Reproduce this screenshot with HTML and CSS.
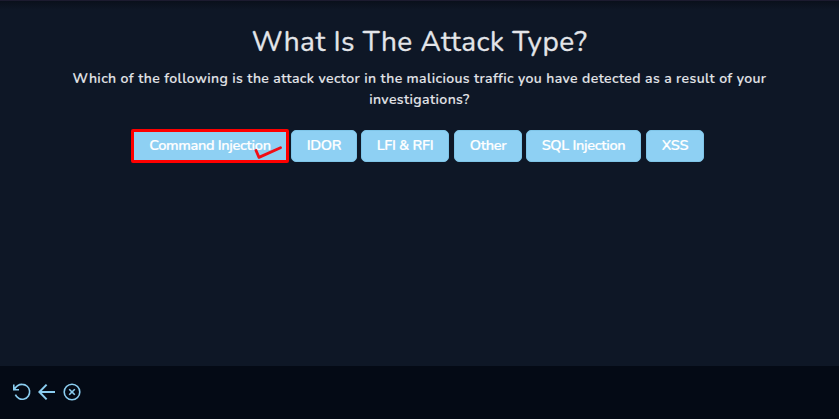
FILE: index.html
```
<!DOCTYPE html>
<html lang="en">
<head>
<meta charset="utf-8">
<title>What Is The Attack Type?</title>
<link rel="stylesheet" href="styles.css">
</head>
<body>
<main class="question">
  <h1><span>What Is The Attack Type?</span></h1>
  <p><span class="line first">Which of the following is the attack vector in the malicious traffic you have detected as a result of your</span> <span class="line second">investigations?</span></p>
  <div class="answers">
    <button class="answer command selected"><span>Command Injection</span>
      <svg class="check" width="30" height="17" viewBox="0 0 30 17"><path d="M3 4.5 6 11.4 27.5 1.7" fill="none" stroke="#f20d16" stroke-width="2.8" stroke-linecap="round" stroke-linejoin="round"/></svg>
    </button>
    <button class="answer idor"><span>IDOR</span></button>
    <button class="answer lfi"><span>LFI &amp; RFI</span></button>
    <button class="answer other"><span>Other</span></button>
    <button class="answer sql"><span>SQL Injection</span></button>
    <button class="answer xss"><span>XSS</span></button>
  </div>
</main>
<footer class="toolbar">
  <svg width="18" height="18" viewBox="0 0 18 18"><path d="M.8 1.5V6.8H6M1.2 6.6C3 3.2 6 1.3 9.3 1.4A7.4 7.4 0 1 1 2.4 11.6" /></svg>
  <svg width="18" height="18" viewBox="0 0 18 18"><path class="arrow" d="M17 9H1.6M8.6 1.6 1.4 9l7.2 7.4"/></svg>
  <svg width="18" height="18" viewBox="0 0 18 18"><circle cx="9" cy="9" r="7.8"/><path d="m6.2 6.2 5.6 5.6m0-5.6-5.6 5.6"/></svg>
</footer>
</body>
</html>
```
FILE: styles.css
```
* { box-sizing: border-box; }
body {
  margin: 0;
  height: 419px;
  display: flex;
  flex-direction: column;
  overflow: hidden;
  border-top: 1px solid #1c1b2f;
  background: #0e1726;
  color: #e3e5e9;
  font-family: Nunito, Lato, sans-serif;
}
.question {
  flex: 1;
  padding-top: 23px;
  background: linear-gradient(#0a101b, #0e1726 9px);
  text-align: center;
}
h1 {
  margin: 0;
  font-size: 28px;
  line-height: 36px;
  font-weight: 400;
  letter-spacing: .5px;
  -webkit-text-stroke: .3px;
  white-space: nowrap;
}
p {
  margin: 8px 0 0;
  font-size: 14px;
  line-height: 21px;
  font-weight: 600;
  letter-spacing: .385px;
  -webkit-text-stroke: .1px;
}
.line { display: block; white-space: nowrap; }
.answers {
  display: flex;
  margin: 19px 0 0 131px;
  height: 34px;
  align-items: center;
}
.answer {
  position: relative;
  flex: none;
  height: 32px;
  padding: 0 0 2px;
  border: 1px solid #7fc5e8;
  border-radius: 5px;
  background: #8ed0f3;
  color: #fff;
  font: 600 14.5px/20px Nunito, Lato, sans-serif;
  letter-spacing: -.33px;
  -webkit-text-stroke: .2px;
  white-space: nowrap;
}
.selected {
  height: 34px;
  border: 3px solid #fe0000;
  border-radius: 2px;
}
.command { width: 158px; margin-right: 2px; }
.idor { width: 66px; margin-right: 4px; }
.lfi { width: 88px; margin-right: 5px; }
.other { width: 68px; margin-right: 4px; }
.sql { width: 115px; margin-right: 5px; }
.xss { width: 58px; }
.check { position: absolute; left: 119px; top: 14px; }
.toolbar {
  height: 53px;
  display: flex;
  align-items: center;
  gap: 7px;
  padding: 0 13px 1px;
  background: #040a15;
}
.toolbar svg {
  fill: none;
  stroke: #8bcdf0;
  stroke-width: 1.6;
}
.toolbar .arrow { stroke-width: 2; }
```
